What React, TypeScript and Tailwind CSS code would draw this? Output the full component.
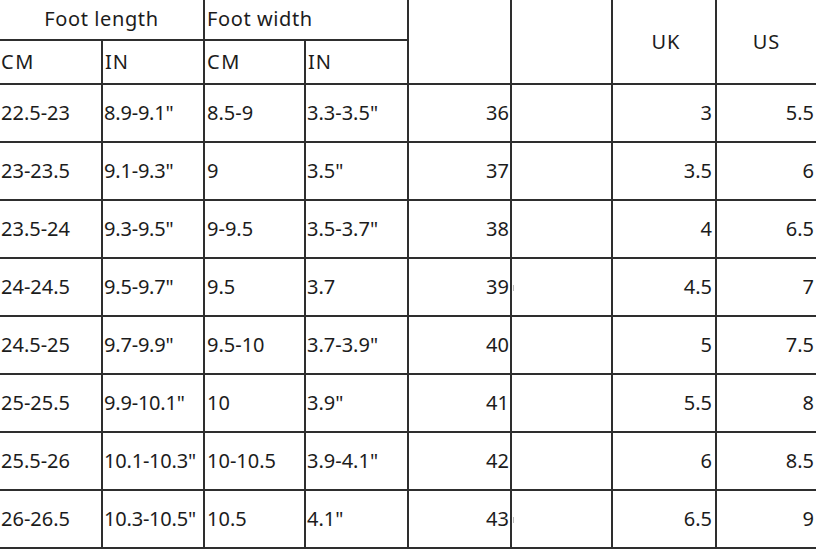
const ROWS = [
  ['22.5-23', '8.9-9.1"', '8.5-9', '3.3-3.5"', '36', '3', '5.5'],
  ['23-23.5', '9.1-9.3"', '9', '3.5"', '37', '3.5', '6'],
  ['23.5-24', '9.3-9.5"', '9-9.5', '3.5-3.7"', '38', '4', '6.5'],
  ['24-24.5', '9.5-9.7"', '9.5', '3.7', '39', '4.5', '7'],
  ['24.5-25', '9.7-9.9"', '9.5-10', '3.7-3.9"', '40', '5', '7.5'],
  ['25-25.5', '9.9-10.1"', '10', '3.9"', '41', '5.5', '8'],
  ['25.5-26', '10.1-10.3"', '10-10.5', '3.9-4.1"', '42', '6', '8.5'],
  ['26-26.5', '10.3-10.5"', '10.5', '4.1"', '43', '6.5', '9'],
]

const cell = 'bg-white flex items-center'

export default function App() {
  return (
    <div
      className="w-[816px] h-[549px] overflow-hidden bg-white text-[#1c1c1c] text-[20px] leading-none"
      style={{ fontFamily: '"Noto Sans", "Open Sans", sans-serif' }}
    >
      <div className="grid grid-cols-[101px_100px_99px_101px_101px_99px_102px_99px] grid-rows-[39px_42px_repeat(8,56px)] gap-[2px] bg-[#2e2e2e] pb-[2px]">
        {/* Header */}
        <div className={`${cell} col-span-2 justify-center pb-[2px] tracking-[0.6px]`}>Foot length</div>
        <div className={`${cell} col-span-2 pl-[2px] pb-[2px] tracking-[0.6px]`}>Foot width</div>
        <div className={`${cell} row-span-2`} />
        <div className={`${cell} row-span-2`} />
        <div className={`${cell} row-span-2 justify-center pl-1 tracking-[1px]`}>UK</div>
        <div className={`${cell} row-span-2 justify-center tracking-[1px]`}>US</div>
        <div className={`${cell} pl-[1px] tracking-[1.5px]`}>CM</div>
        <div className={`${cell} pl-[2px] tracking-[1px]`}>IN</div>
        <div className={`${cell} pl-[2px] tracking-[1.5px]`}>CM</div>
        <div className={`${cell} pl-[2px] tracking-[1px]`}>IN</div>

        {/* Sizes */}
        {ROWS.map((r, i) => (
          <div key={i} className="contents">
            <div className={`${cell} pl-[1px]`}>{r[0]}</div>
            <div className={`${cell} pl-[1px] tracking-[-0.2px]`}>{r[1]}</div>
            <div className={`${cell} pl-[2px]`}>{r[2]}</div>
            <div className={`${cell} pl-[1px]`}>{r[3]}</div>
            <div className={`${cell} relative justify-end pr-[1px]`}>
              {r[4]}
              {(r[4] === '39' || r[4] === '43') && (
                <span className="absolute right-[-4px] top-[26px] h-[6px] w-[1px] bg-[#bbbbbb]" />
              )}
            </div>
            <div className={cell} />
            <div className={`${cell} justify-end pr-[3px]`}>{r[5]}</div>
            <div className={`${cell} justify-end pr-[2px]`}>{r[6]}</div>
          </div>
        ))}
      </div>
    </div>
  )
}
